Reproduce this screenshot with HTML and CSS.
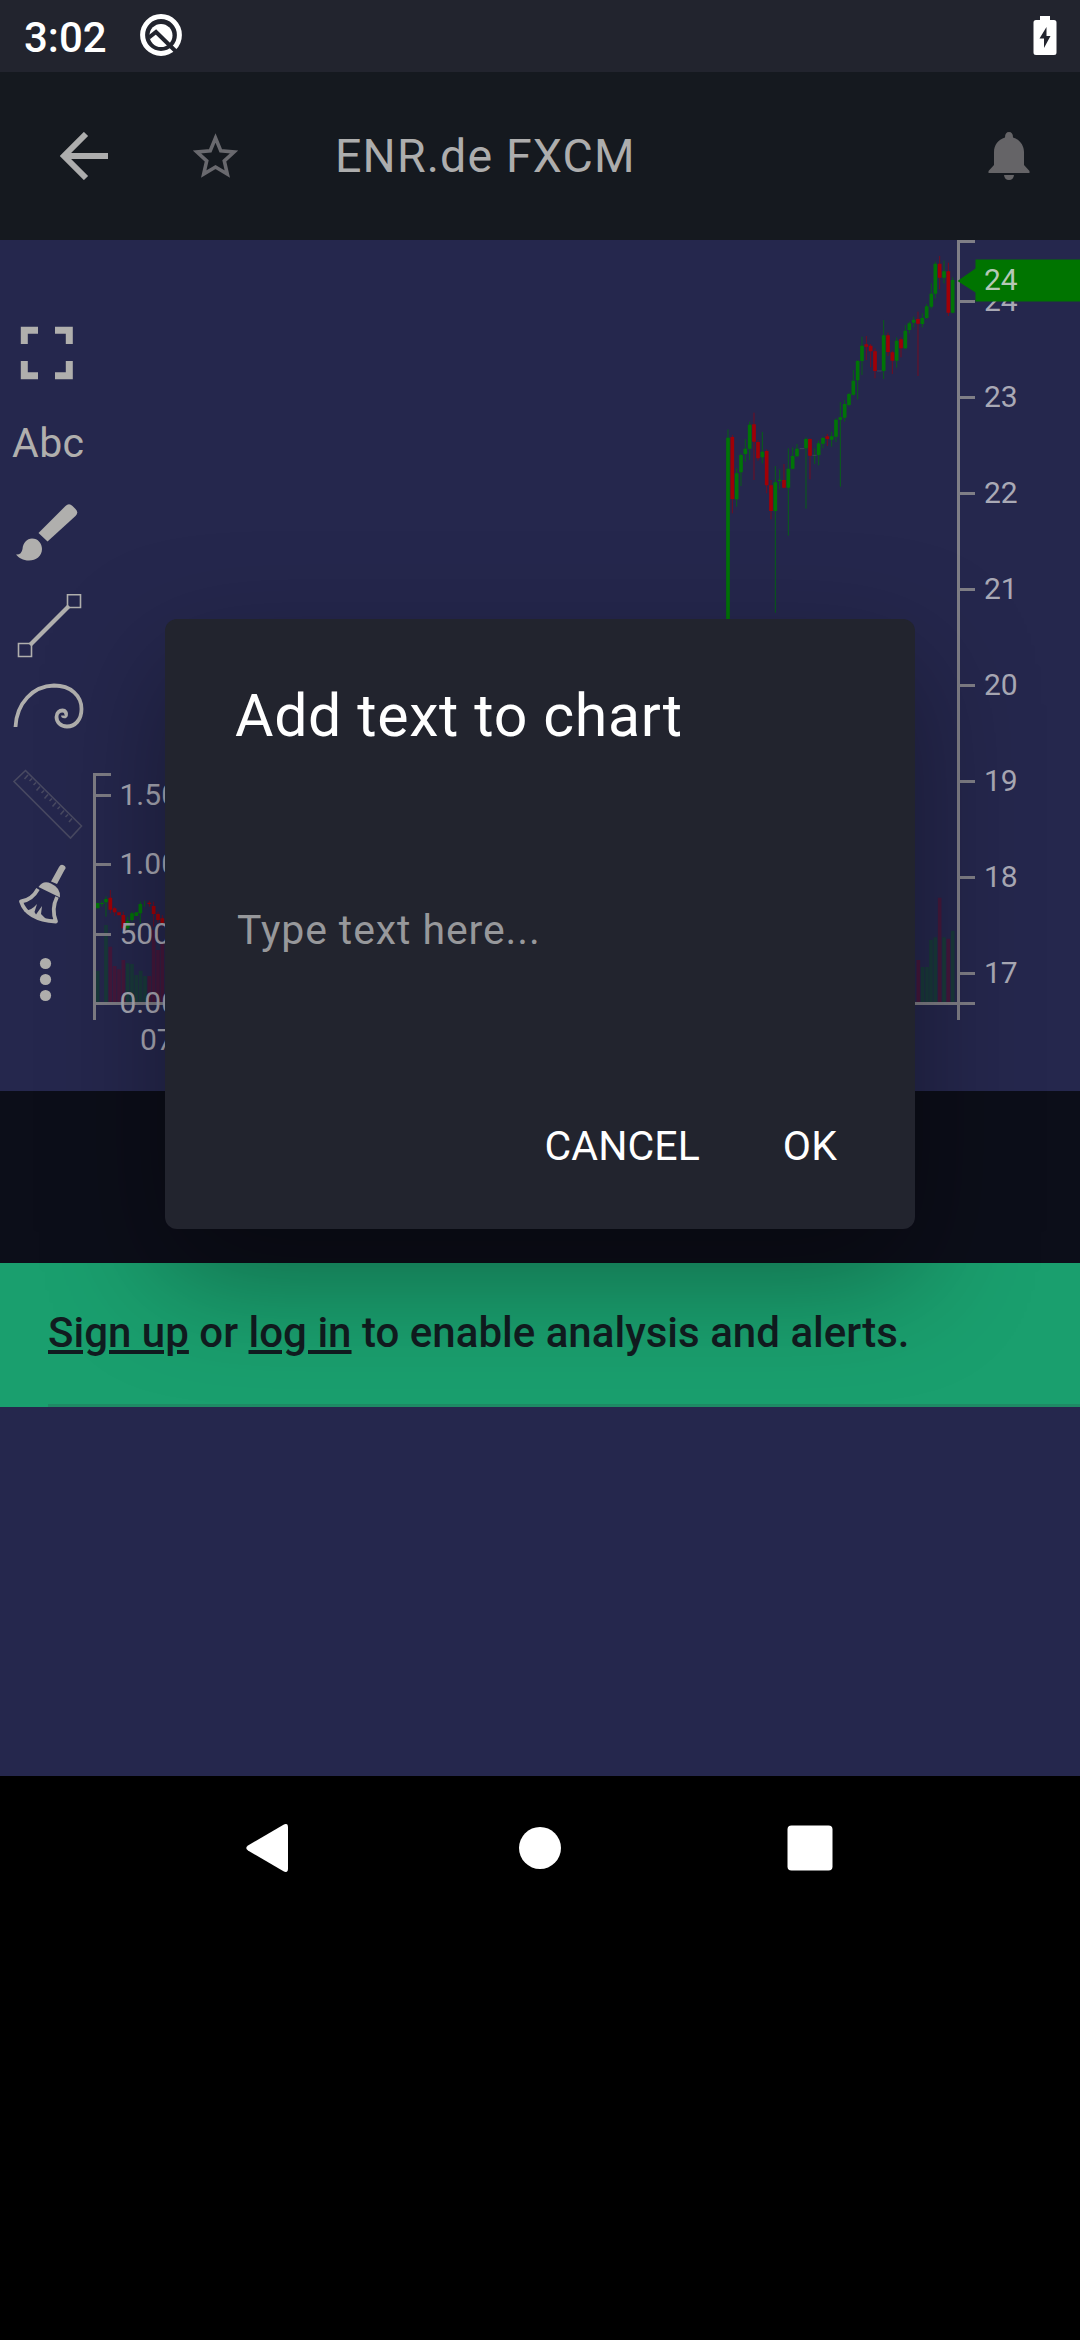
FILE: index.html
```html
<!DOCTYPE html>
<html lang="en">
<head>
<meta charset="utf-8">
<title>ENR.de FXCM</title>
<link rel="stylesheet" href="styles.css">
</head>
<body>
<div class="screen">
  <div class="status">
    <span class="clock">3:02</span>
    <svg class="status-logo" width="44" height="44" viewBox="139 13.5 44 44">
      <circle cx="161" cy="35.5" r="18.4" fill="none" stroke="#fff" stroke-width="5"/>
      <circle cx="161" cy="36" r="11.5" fill="#fff"/>
      <path d="M149 38L156 32.500L178 54" fill="none" stroke="#22242e" stroke-width="4"/>
    </svg>
    <svg class="battery" width="24" height="40" viewBox="0 0 24 40">
      <path d="M7 0H17V4H21Q23.500 4 23.500 6.500V36.500Q23.500 39 21 39H3Q.5 39 .5 36.500V6.500Q.5 4 3 4H7Z" fill="#fff"/>
      <path d="M13.500 11L6.500 22.500H11V32L17.500 20H13.500Z" fill="#22242e"/>
    </svg>
  </div>

  <header class="appbar">
    <svg class="back" width="48" height="48" viewBox="0 0 48 48"><path d="M26 2L4 24L26 46M4 24H48" fill="none" stroke="#adadad" stroke-width="6"/></svg>
    <svg class="star" width="48" height="48" viewBox="0 0 48 48"><path d="M24.500 6L29.800 18.900L43 20L33.300 28.900L36.300 42L24.500 35L12.700 42L15.700 28.900L6 20L19.200 18.900Z" fill="none" stroke="#69696e" stroke-width="3.600"/></svg>
    <h1 class="title">ENR.de FXCM</h1>
    <svg class="bell" width="42" height="48" viewBox="0 0 42 48"><path d="M21 0Q25 0 25 5.500C32 7.500 36 13.500 36 20V33L41.500 39V41H.5V39L6 33V20C6 13.500 10 7.500 17 5.500Q17 0 21 0ZM16 43H26Q25.500 48 21 48T16 43Z" fill="#656467"/></svg>
  </header>

  <main class="chart">
    <svg class="plot" width="1080" height="851" viewBox="0 240 1080 851">
      <!-- price candles, right side -->
      <g transform="translate(700 230) scale(.33333)" fill="none">
        <g stroke="#006a0c" stroke-width="2.500">
          <path d="M84 598V630M110 715V830M123 670V768M136 627V695M149 575V690M187 606V700M226 708V1148M239 718V778M265 655V917M278 652V718M291 642V682M318 622V836M344 655V702M356 632V706M369 620V655M395 605V650M408 565V636M421 516V770M434 510V575M447 488V530M460 420V497M473 390V508M486 320V435M551 270V447M590 322V413M616 285V357M628 275V310M641 260V292M667 250V292M680 222V267M694 160V236M706 95V205M732 92V160M758 142V250"/>
        </g>
        <g stroke="#820718" stroke-width="2.500">
          <path d="M97 615V850M162 548V750M174 630V692M200 658V790M213 750V868M252 702V775M330 625V748M382 612V648M499 318V390M512 342V412M525 355V445M564 308V378M577 362V432M603 322V382M654 245V438M719 78V178M745 98V258"/>
        </g>
        <path stroke="#007407" stroke-width="11" d="M84 623V1170M110 730V808M123 675V727M136 656V672M149 584V656M187 665V682M226 757V843M239 749V753M265 716V773M278 678V716M291 656V679M318 627V655M356 640V675M369 624V641M395 619V629M408 569V620M421 562V569M434 522V563M447 492V525M460 452V494M473 393V451M486 347V393M551 316V423M590 332V392M616 302V355M628 280V300M641 269V278M667 264V282M680 229V264M694 191V230M706 101V191M732 124V143M758 150V248"/>
        <path stroke="#a00006" stroke-width="11" d="M97 621V807M162 583V635M174 636V685M200 663V766M213 766V843M252 750V773M330 627V677M382 619V627M499 343V350M512 347V364M525 364V423M564 316V366M577 367V392M603 328V355M654 267V281M719 101V143M745 124V248"/>
        <path stroke="#4a5360" stroke-width="2" d="M299 656H313M531 423H545M337 676H350"/>
      </g>
      <!-- volume, right side -->
      <g transform="translate(880 600) scale(.33333)" fill="none" stroke-width="11">
        <path stroke="#45183c" d="M115 1080V1206M179 893V1206M205 1016V1206"/>
        <path stroke="#193a3b" d="M128 1101V1206M141 1101V1206M153 1019V1206M166 1012V1206M192 1012V1206M218 992V1206"/>
      </g>
      <!-- volume and candles, left side -->
      <g transform="translate(0 660) scale(.33333)" fill="none" stroke-width="11">
        <path stroke="#193a3b" d="M293 933V1027M318 795V1027M383 910V1027M396 912V1027M409 945V1027M422 932V1027M435 948V1027"/>
        <path stroke="#45183c" d="M331 860V1027M344 918V1027M357 928V1027M370 900V1027M448 948V1027M461 810V1027M474 870V1027M487 850V1027"/>
        <path stroke="#006a0c" stroke-width="2.500" d="M306 722V740M318 709V770M383 770V812M396 755V785M421 725V790M434 722V740"/>
        <path stroke="#820718" stroke-width="2.500" d="M331 690V760M344 740V768M370 755V812M448 722V740M461 725V800M474 755V788M487 765V800"/>
        <path stroke="#007407" d="M293 729V745M306 729V732M318 717V727M383 783V805M396 760V780M409 757V768M421 732V760"/>
        <path stroke="#a00006" d="M331 713V749M344 745V757M357 757V766M370 765V805M448 728V732M461 738V762M474 762V780M487 775V790"/>
      </g>
      <!-- axes -->
      <path fill="none" stroke="#7f7e86" stroke-width="3" d="M111 774.500H94.500V1020M96 795.500H111M96 864.500H111M96 934.500H111M94 1003.500H975M975 241.500H958.500V1020M960 301.500H975M960 397.500H975M960 493.500H975M960 589.500H975M960 685.500H975M960 781.500H975M960 877.500H975M960 973.500H975"/>
      <g class="tick">
        <text x="119.500" y="805">1.50</text>
        <text x="119.500" y="874">1.00</text>
        <text x="119.500" y="944">500</text>
        <text x="119.500" y="1013">0.00</text>
        <text x="140" y="1050">07</text>
        <text x="984" y="311">24</text>
        <text x="984" y="407">23</text>
        <text x="984" y="503">22</text>
        <text x="984" y="599">21</text>
        <text x="984" y="695">20</text>
        <text x="984" y="791">19</text>
        <text x="984" y="887">18</text>
        <text x="984" y="983">17</text>
      </g>
      <path d="M957.500 281L975.500 268.500V259.500H1080V301.500H975.500V292.500Z" fill="#007400"/>
      <text class="last" x="984" y="290">24</text>
    </svg>

    <div class="tools">
      <svg width="96" height="100" viewBox="0 300 96 100"><path d="M38 330.300H24.300V344M55 330.300H69.300V344M38 375.700H24.300V361M55 375.700H69.300V361" fill="none" stroke="#b0afad" stroke-width="7"/></svg>
      <div class="abc">Abc</div>
      <svg width="96" height="90" viewBox="0 490 96 90" fill="#b0afad">
        <path d="M38.500 533L65.500 506Q69 502.500 72.500 506L75.500 509Q79 512.500 75.500 516L47.500 541.500Z"/>
        <path d="M16 554.500Q21.500 555 22.500 549C23 543 27 538.500 32 538.500C38 538.500 42 543.500 42 549C42 556 36 560.500 29 560.500C23 560.500 19 558 16 554.500Z"/>
      </svg>
      <svg width="96" height="90" viewBox="0 580 96 90" fill="none" stroke="#b0afad">
        <path d="M30 645L69 606" stroke-width="4.200"/>
        <path d="M67.500 594.700H80.500V607.500H67.500ZM18.500 643.500H31.500V656.500H18.500Z" stroke-width="1.600"/>
      </svg>
      <svg width="96" height="80" viewBox="0 670 96 80" fill="none" stroke="#b0afad" stroke-width="3.800">
        <path d="M15.500 727C16.500 703 33 686 54 685.500C71 685.500 81.500 696 81.500 709C81.500 720 75 726.500 67 726.500C60.500 726.500 56.500 722 56.500 717C56.500 712.500 59.500 710.500 62.500 710.500C65.500 710.500 66.500 713 66 715C65.500 717 63 716.500 63 715.500"/>
      </svg>
      <svg width="96" height="100" viewBox="0 750 96 100" fill="none" stroke="#484961" stroke-width="1.600">
        <path d="M25.500 770.500L81.500 826L70.500 838L14 781.500Z"/>
        <path d="M28 775L24.500 779M32 778.500L29.500 781M36 782.500L33.500 785M40 786.500L36.500 790.500M44 790.500L41.500 793M48 794.500L44.500 798.500M52 798.500L49.500 801M56 802.500L52.500 806.500M60 806.500L57.500 809M64 810.500L60.500 814.500M68 814.500L65.500 817M72 818.500L69 822"/>
      </svg>
      <svg width="96" height="90" viewBox="0 850 96 90">
        <path d="M51 881.500L59 867Q61 863.500 64 865.500T64.500 870L57 884Z" fill="#b0afad"/>
        <path d="M38.500 887Q43 880 51 883.500Q61 888 60 897.500Z" fill="#b0afad"/>
        <path d="M38 889Q32 900 21 901.500Q27 920 56 921.500Q51 909 57 897" fill="none" stroke="#b0afad" stroke-width="3.800" stroke-linejoin="round"/>
        <path d="M24 911Q31 911 37 904L34.500 912L36 914.500L42 906L41 914L44 917L46.500 919.500L34 917Z" fill="#b0afad"/>
      </svg>
      <svg width="96" height="75" viewBox="0 940 96 75" fill="#b0afad"><circle cx="45.500" cy="963.500" r="5.600"/><circle cx="45.500" cy="979.500" r="5.600"/><circle cx="45.500" cy="995.500" r="5.600"/></svg>
    </div>
  </main>

  <div class="band"></div>
  <p class="signup"><span class="link">Sign up</span> or <span class="link">log in</span> to enable analysis and alerts.</p>
  <div class="rest"></div>

  <nav class="navbar">
    <svg width="48" height="48" viewBox="0 0 48 48"><path d="M37.500 .7Q42 -1.500 42 3V45Q42 49.500 37.500 47.300L2 26.500Q-1.500 24 2 21.500Z" fill="#fff"/></svg>
    <svg width="48" height="48" viewBox="0 0 48 48"><circle cx="24" cy="24" r="21" fill="#fff"/></svg>
    <svg width="48" height="48" viewBox="0 0 48 48"><rect x="1.500" y="1.500" width="45" height="45" rx="4" fill="#fff"/></svg>
  </nav>

  <section class="dialog">
    <h2 class="dialog-title">Add text to chart</h2>
    <div class="field">Type text here...</div>
    <div class="actions"><span>CANCEL</span><span>OK</span></div>
  </section>
</div>
</body>
</html>
```
FILE: styles.css
```css
* { box-sizing: border-box; }
body {
  margin: 0;
  background: #000;
  font-family: Roboto, "Liberation Sans", sans-serif;
}
h1, h2, p { margin: 0; font-weight: 400; }
svg { display: block; flex: none; }
.screen {
  position: relative;
  display: flex;
  flex-direction: column;
  width: 1080px;
  height: 2340px;
  overflow: hidden;
}
.status {
  display: flex;
  align-items: flex-start;
  height: 72px;
  padding: 0 23px 0 24px;
  background: #22242e;
}
.clock {
  width: 115px;
  padding-top: 13px;
  color: #fff;
  font-size: 42px;
  font-weight: 500;
  line-height: 50px;
}
.status-logo { margin-top: 13px; }
.battery { margin: 16px 0 0 auto; }
.appbar {
  display: flex;
  align-items: center;
  height: 168px;
  padding: 0 50px 0 60px;
  background: #15191f;
}
.star { margin-left: 83px; }
.title {
  margin-left: 96px;
  color: #adadad;
  font-size: 46.5px;
  line-height: 56px;
  letter-spacing: 1.15px;
}
.bell { margin-left: auto; }
.chart {
  display: grid;
  height: 851px;
  background: #25274d;
}
.plot, .tools { grid-area: 1 / 1; }
.tick { fill: #a9a9b5; font-size: 30px; }
.last { fill: #b5c8b5; font-size: 30px; }
.tools {
  display: flex;
  flex-direction: column;
  width: 96px;
  padding-top: 60px;
}
.abc {
  height: 90px;
  padding: 19px 0 0 12px;
  color: #b0afad;
  font-size: 41px;
  line-height: 48px;
  letter-spacing: .4px;
}
.band { height: 172px; background: #0c0e19; }
.signup {
  height: 144px;
  padding: 45px 48px 0;
  background:
    linear-gradient(#1f8a65, #1f8a65) 48px 100% / 100% 3px no-repeat,
    #1a9f6e;
  color: #111c20;
  font-size: 42px;
  font-weight: 500;
  line-height: 50px;
  letter-spacing: .02px;
}
.link {
  text-decoration: underline;
  text-decoration-thickness: 4px;
  text-underline-offset: 3px;
}
.rest { height: 369px; background: #25274d; }
.navbar {
  display: grid;
  grid-template-columns: repeat(3, 1fr);
  align-items: center;
  justify-items: center;
  height: 144px;
  padding: 0 135px;
}
.dialog {
  position: absolute;
  left: 165px;
  top: 619px;
  display: flex;
  flex-direction: column;
  width: 750px;
  height: 610px;
  padding: 62px 78px 0 70px;
  border-radius: 12px;
  background: #22242e;
  box-shadow: 0 44px 120px rgba(0, 0, 0, .36);
}
.dialog-title {
  color: #fff;
  font-size: 59px;
  line-height: 70px;
  letter-spacing: .65px;
}
.field {
  margin-top: 155px;
  padding-left: 2px;
  color: #97989b;
  font-size: 41px;
  line-height: 48px;
  letter-spacing: .9px;
}
.actions {
  display: flex;
  justify-content: flex-end;
  gap: 83px;
  margin-top: 168px;
  color: #fff;
  font-size: 41px;
  line-height: 48px;
  letter-spacing: .1px;
}
```
